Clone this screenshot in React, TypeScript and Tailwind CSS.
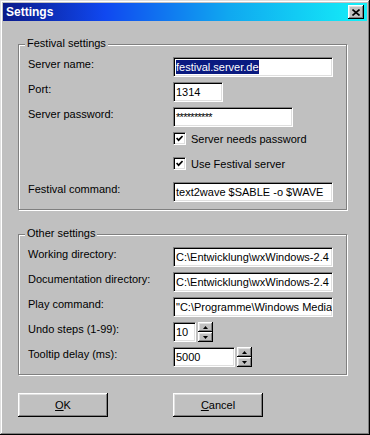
import React from "react";

const sunken =
  "border border-[#808080] border-r-white border-b-white shadow-[inset_1px_1px_#000,inset_-1px_-1px_#dfdfdf]";
const raised =
  "shadow-[inset_-1px_-1px_#000,inset_1px_1px_#fff,inset_-2px_-2px_#808080,inset_2px_2px_#dfdfdf]";

function TextBox({ className, children }: { className: string; children: React.ReactNode }) {
  return (
    <div
      className={`${sunken} ${className} bg-white h-[20px] flex items-center pl-[2px] overflow-hidden whitespace-nowrap leading-[14px]`}
    >
      {children}
    </div>
  );
}

function Row({ label, children }: { label: string; children: React.ReactNode }) {
  return (
    <div className="flex h-[20px]">
      <div className="w-[145px] shrink-0 leading-[14px] whitespace-nowrap">{label}</div>
      <div className="flex">{children}</div>
    </div>
  );
}

function Check({ label }: { label: string }) {
  return (
    <div className="flex h-[20px]">
      <div className="w-[145px] shrink-0" />
      <div className="flex items-center h-[13px] gap-[5px]">
        <div className={`${sunken} bg-white w-[13px] h-[13px] flex items-center justify-center`}>
          <svg width="7" height="7" viewBox="0 0 7 7">
            <polyline points="0.6,3 2.6,5.2 6.6,1" fill="none" stroke="#000" strokeWidth="1.7" />
          </svg>
        </div>
        <span className="leading-[14px] whitespace-nowrap">{label}</span>
      </div>
    </div>
  );
}

function Spin() {
  return (
    <div className="flex flex-col w-[15px] ml-[2px]">
      <div className={`${raised} bg-[#c0c0c0] h-[10px] flex items-center justify-center`}>
        <svg width="5" height="3" viewBox="0 0 5 3">
          <polygon points="0,3 5,3 2.5,0" fill="#000" />
        </svg>
      </div>
      <div className={`${raised} bg-[#c0c0c0] h-[10px] flex items-center justify-center`}>
        <svg width="5" height="3" viewBox="0 0 5 3">
          <polygon points="0,0 5,0 2.5,3" fill="#000" />
        </svg>
      </div>
    </div>
  );
}

function Group({ title, className, children }: { title: string; className: string; children: React.ReactNode }) {
  return (
    <div
      className={`relative w-[329px] border border-[#808080] shadow-[inset_1px_1px_#fff,1px_1px_#fff] pl-[9px] pt-[12px] pb-[7px] ${className}`}
    >
      <span className="absolute left-[6px] top-[-8px] px-[2px] bg-[#c0c0c0] leading-[13px] whitespace-nowrap">
        {title}
      </span>
      <div className="flex flex-col gap-[5px]">{children}</div>
    </div>
  );
}

function Button({ children }: { children: React.ReactNode }) {
  return (
    <div className={`${raised} bg-[#c0c0c0] w-[90px] h-[24px] flex items-center justify-center leading-[14px]`}>
      {children}
    </div>
  );
}

export default function App() {
  return (
    <div className="w-[370px] h-[435px] bg-[#c0c0c0] p-[3px] flex flex-col text-[11px] text-black font-['Liberation_Sans',Arial,sans-serif] shadow-[inset_-1px_-1px_#000,inset_1px_1px_#dfdfdf,inset_-2px_-2px_#808080,inset_2px_2px_#fff]">
      <div className="h-[18px] flex items-center justify-between pl-[3px] pr-[3px] bg-[linear-gradient(to_right,#0a1a8a_0%,#1048f0_28%,#10a8f0_62%,#14f0f8_100%)]">
        <span className="text-white font-bold text-[12px] leading-[14px]">Settings</span>
        <div className={`${raised} bg-[#c0c0c0] w-[16px] h-[14px] flex items-center justify-center`}>
          <svg width="8" height="7" viewBox="0 0 8 7">
            <path d="M0.5 0.5 L7.5 6.5 M7.5 0.5 L0.5 6.5" stroke="#000" strokeWidth="1.6" fill="none" />
          </svg>
        </div>
      </div>

      <div className="flex flex-col pl-[15px]">
        <Group title="Festival settings" className="mt-[23px]">
          <Row label="Server name:">
            <TextBox className="w-[160px]">
              <span className="bg-[#0a1a80] text-white">festival.server.de</span>
            </TextBox>
          </Row>
          <Row label="Port:">
            <TextBox className="w-[50px]">1314</TextBox>
          </Row>
          <Row label="Server password:">
            <TextBox className="w-[120px]">
              <span className="tracking-[-0.7px]">**********</span>
            </TextBox>
          </Row>
          <Check label="Server needs password" />
          <Check label="Use Festival server" />
          <Row label="Festival command:">
            <TextBox className="w-[160px]">text2wave $SABLE -o $WAVE</TextBox>
          </Row>
        </Group>

        <Group title="Other settings" className="mt-[24px]">
          <Row label="Working directory:">
            <TextBox className="w-[160px]">C:\Entwicklung\wxWindows-2.4</TextBox>
          </Row>
          <Row label="Documentation directory:">
            <TextBox className="w-[160px]">C:\Entwicklung\wxWindows-2.4</TextBox>
          </Row>
          <Row label="Play command:">
            <TextBox className="w-[160px]">"C:\Programme\Windows Media</TextBox>
          </Row>
          <Row label="Undo steps (1-99):">
            <TextBox className="w-[23px]">10</TextBox>
            <Spin />
          </Row>
          <Row label="Tooltip delay (ms):">
            <TextBox className="w-[62px]">5000</TextBox>
            <Spin />
          </Row>
        </Group>

        <div className="flex gap-[65px] mt-[18px]">
          <Button>
            <span>
              <span className="underline">O</span>K
            </span>
          </Button>
          <Button>
            <span>
              <span className="underline">C</span>ancel
            </span>
          </Button>
        </div>
      </div>
    </div>
  );
}
